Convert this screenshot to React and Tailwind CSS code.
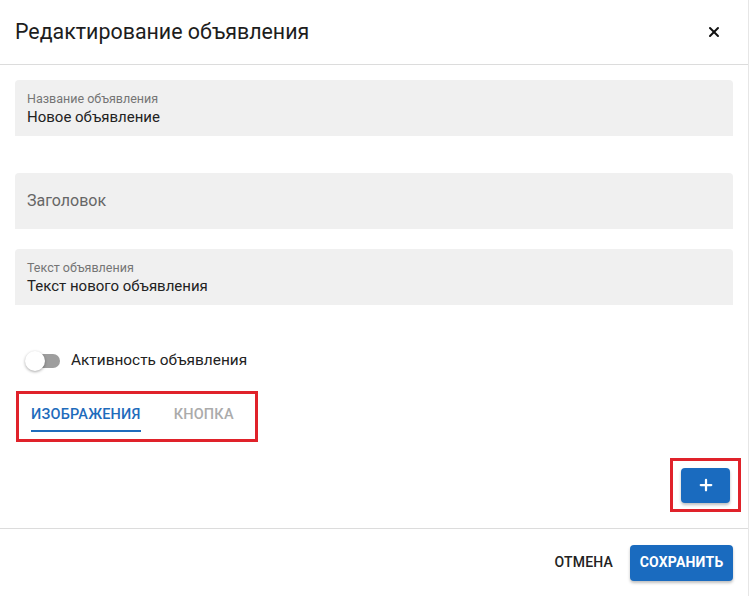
import { X, Plus } from 'lucide-react';

function Field({ label, value, placeholder }) {
  return (
    <div className="h-[56px] rounded-t-[4px] bg-[#f0f0f0] px-[12px] flex flex-col justify-center">
      {label ? (
        <>
          <div className="text-[12.5px] leading-[14px] text-[#757575] mt-[3px]">{label}</div>
          <div className="text-[15px] leading-[20px] text-[#222] mt-[1px]">{value}</div>
        </>
      ) : (
        <div className="text-[16px] leading-[20px] text-[#666]">{placeholder}</div>
      )}
    </div>
  );
}

export default function App() {
  return (
    <div className="w-[749px] h-[596px] bg-white border-r border-[#e6e6e6] font-['Roboto',sans-serif] flex flex-col">
      {/* Header */}
      <div className="h-[65px] shrink-0 flex items-center justify-between pl-[15px] pr-[26px] border-b border-[#dcdcdc]">
        <h2 className="text-[21.4px] leading-[24px] text-[#1d1d1d] font-normal">Редактирование объявления</h2>
        <X size={16} strokeWidth={3} className="text-[#111]" />
      </div>

      {/* Body */}
      <div className="flex-1 px-[15px] pt-[15px]">
        <Field label="Название объявления" value="Новое объявление" />
        <div className="mt-[37px]">
          <Field placeholder="Заголовок" />
        </div>
        <div className="mt-[20px]">
          <Field label="Текст объявления" value="Текст нового объявления" />
        </div>

        {/* Switch */}
        <div className="mt-[42px] flex items-center h-[28px]">
          <div className="relative w-[46px] h-[20px] ml-[10px] flex items-center">
            <div className="absolute left-[1px] w-[34px] h-[14px] rounded-full bg-[#9e9e9e]" />
            <div className="absolute left-0 w-[20px] h-[20px] rounded-full bg-white shadow-[0_1px_3px_rgba(0,0,0,0.35)]" />
          </div>
          <span className="text-[15.4px] text-[#222]">Активность объявления</span>
        </div>

        {/* Tabs */}
        <div className="mt-[16px] ml-[1px] w-[242px] h-[51px] border-[3px] border-[#e0222a] pl-[12px] pt-[12px] flex gap-[33px]">
          <div className="flex flex-col">
            <span className="text-[14.5px] leading-[18px] font-medium text-[#1f6cbc] tracking-[0.2px]">ИЗОБРАЖЕНИЯ</span>
            <div className="mt-[6px] h-[2px] bg-[#1f6cbc]" />
          </div>
          <span className="text-[14.5px] leading-[18px] font-medium text-[#ababab] tracking-[0.2px]">КНОПКА</span>
        </div>

        {/* Add button */}
        <div className="flex justify-end mt-[16px]">
          <div className="w-[71px] h-[54px] border-[3px] border-[#e0222a] flex items-center justify-center mr-[-8px]">
            <button className="w-[49px] h-[35px] rounded-[4px] bg-[#1a6bbf] shadow-[0_2px_3px_rgba(0,0,0,0.25)] flex items-center justify-center text-white">
              <Plus size={18} strokeWidth={3} />
            </button>
          </div>
        </div>
      </div>

      {/* Footer */}
      <div className="h-[68px] shrink-0 border-t border-[#dcdcdc] flex items-center justify-end pr-[15px] gap-[9px]">
        <button className="px-[8px] h-[36px] text-[14px] font-medium text-[#222] tracking-[0.2px]">ОТМЕНА</button>
        <button className="w-[103px] h-[36px] rounded-[4px] bg-[#1a6bbf] shadow-[0_2px_3px_rgba(0,0,0,0.25)] text-white text-[14px] font-bold tracking-[0.2px]">СОХРАНИТЬ</button>
      </div>
    </div>
  );
}
